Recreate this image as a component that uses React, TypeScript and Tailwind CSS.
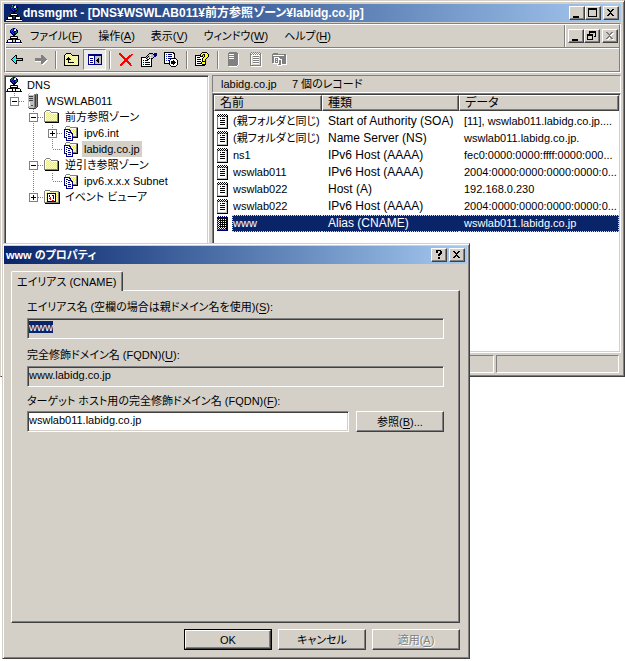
import { useEffect, useRef, useState, ReactNode } from "react";
import clsx from "clsx";

const raised =
  "border border-t-white border-l-white border-r-[#404040] border-b-[#404040] shadow-[inset_-1px_-1px_0_#808080] bg-[#d4d0c8]";
const sunken =
  "border border-t-[#808080] border-l-[#808080] border-r-white border-b-white shadow-[inset_1px_1px_0_#404040,inset_-1px_-1px_0_#d4d0c8]";
const shallow = "border border-t-[#808080] border-l-[#808080] border-r-white border-b-white";
const titleBar =
  "flex h-[18px] items-center bg-linear-to-r from-[#0a246a] to-[#a6caf0] px-[2px] font-bold text-white";

const colors: Record<string, string> = {
  K: "#000000",
  D: "#404040",
  G: "#808080",
  S: "#c0c0c0",
  W: "#ffffff",
  N: "#000080",
  B: "#2040d0",
  C: "#00ffff",
  Y: "#ffff00",
  P: "#f4ec5a",
  y: "#ffffb0",
  R: "#ff0000",
  E: "#008040",
};

const icons = {
  dns: [
    "......GNNG......",
    ".....NENSWN.....",
    "....NEBNWWNK....",
    "....NBNBNNEK....",
    "....NNBNNEEK....",
    ".....NNBNNK.....",
    "......NKKK......",
    ".......KK.......",
    "....DKKKKKKD....",
    "....KWWWWWWK....",
    "....KKKKKKKK....",
    "..DKKKKDDKKKKD..",
    ".KWWWWK..KWWWWK.",
    ".KWWWWK..KWWWWK.",
    "KKNNNNKKKKNNNNKK",
    "WWWWWWWWWWWWWWWW",
  ],
  server: [
    "....SWWWWWWS....",
    "...SWWWWWGGGD...",
    "...SSSSSSGDGD...",
    "...SDDDDSGDGD...",
    "...SSSSSSGDGD...",
    "...SDDDDSGDGD...",
    "...SSSSSSGDGD...",
    "...SDDDDSGDGD...",
    "...SSSSSSGDGD...",
    "...SWSSSSGDGD...",
    "...SWSSSSGDGD...",
    "...SWSSSSGDGD...",
    "...SWSRRSGDGD...",
    "...SSSSSSGDGD...",
    "...GSSSSSGGD....",
    "....DDDDDDD.....",
  ],
  folder: [
    "................",
    "..GGGG..........",
    ".GWWWWG.........",
    "GWyPyPWGGGGGGG..",
    "GWPyPyPWWWWWWGK.",
    "GWyPyPyPyPyPyGK.",
    "GWPyPyPyPyPyPGK.",
    "GWyPyPyPyPyPyGK.",
    "GWPyPyPyPyPyPGK.",
    "GWyPyPyPyPyPyGK.",
    "GWPyPyPyPyPyPGK.",
    "GWyPyPyPyPyPyGK.",
    "GGGGGGGGGGGGGGK.",
    ".KKKKKKKKKKKKKK.",
    "................",
    "................",
  ],
  zone: [
    "................",
    "...GGGG.........",
    "..GWWWWGGGGGGGG.",
    "..GWPyPyWWWWWGK.",
    ".NNNNNNyPyPyPGK.",
    ".NWWWWNNyPyPyGK.",
    ".NWNNWWNPyPyPGK.",
    ".NWWWNNNNyPyPGK.",
    ".NWNWWWWNNyPyGK.",
    ".NWWWNNWWNPyPGK.",
    ".NWNWWWWWNyPyGK.",
    ".NWWWNNNWNGGGGK.",
    ".NNNWWWWWNKKKKK.",
    "...NWNNNWN......",
    "...NWWWWWN......",
    "...NNNNNNN......",
  ],
  events: [
    "................",
    ".GGGGG..........",
    "GWWWWWGGGGGGGGG.",
    "GWyPyPyPyPyPyPGK",
    "GWPKKKKKKKKKyPGK",
    "GWyKWWWWWWWKPyGK",
    "GWPKWNWWNNWKyPGK",
    "GWyKWNWWWNWKPyGK",
    "GWPKWWRWWNWKyPGK",
    "GWyKWRRWWNWKPyGK",
    "GWPKWWRWWWWKyPGK",
    "GWyKWWWWRRWKPyGK",
    "GWPKKKKKKKKKyPGK",
    "GGGGGGGGGGGGGGGK",
    ".KKKKKKKKKKKKKKK",
    "................",
  ],
  record: [
    "..K.K.K.K.K.....",
    ".KWKWKWKWKWK....",
    ".GKSKSKSKSKK....",
    ".GWWWWWWWWSK....",
    ".GWWKWKKKWSK....",
    ".GWWWWWWWWSK....",
    ".GWWKKKKKWSK....",
    ".GWWWWWWWWSK....",
    ".GWWKKKKKWSK....",
    ".GWWWWWWWWSK....",
    ".GWWKKKKKWSK....",
    ".GWWWWWWWWSK....",
    ".GWWWWWWWWSK....",
    ".GSSSSSSSSSK....",
    ".KKKKKKKKKKK....",
    "................",
  ],
  recordSelected: [
    "..N.N.N.N.N.....",
    ".KNKNKNKNKNK....",
    ".NKNKNKNKNKK....",
    ".GNWNWNWNWNK....",
    ".NWKKKKKKNKN....",
    ".GNWNWNWNWNK....",
    ".NWKKKKKKNKN....",
    ".GNWNWNWNWNK....",
    ".NWKKKKKKNKN....",
    ".GNWNWNWNWNK....",
    ".NWKKKKKKNKN....",
    ".GNWNWNWNWNK....",
    ".NWNWNWNWNKN....",
    ".GNGNGNGNGNK....",
    ".KNKNKNKNKNK....",
    "................",
  ],
  back: [
    "................",
    "................",
    "................",
    ".....KK.........",
    "....KCK.........",
    "...KCCK.........",
    "..KCCCKKKKKKK...",
    ".KCCCCCCCCCCK...",
    "..KCCCKKKKKKK...",
    "...KCCK.........",
    "....KCK.........",
    ".....KK.........",
    "................",
    "................",
    "................",
    "................",
  ],
  forward: [
    "................",
    "................",
    "................",
    "........GG......",
    "........GGG.....",
    "........GGGG....",
    "..GGGGGGGGGGG...",
    "..GGGGGGGGGGGG..",
    "..GGGGGGGGGGGWW.",
    "..WWWWWWGGGGWW..",
    "........GGGWW...",
    "........GGWW....",
    ".........WW.....",
    "................",
    "................",
    "................",
  ],
  up: [
    "................",
    "..KKKKK.........",
    ".KyYyYyK........",
    "KyYyYyYyKKKKKKK.",
    "KYyYyYyYyYyYyYK.",
    "KyYyKyYyYyYyYyK.",
    "KYyKKKyYyYyYyYK.",
    "KyKKKKKyYyYyYyK.",
    "KYyYKYyYyYyYyYK.",
    "KyYyKyYyYyYyYyK.",
    "KYyYKKKKKKyYyYK.",
    "KyYyYyYyYyYyYyK.",
    "KYyYyYyYyYyYyYK.",
    "KKKKKKKKKKKKKKK.",
    "................",
    "................",
  ],
  panes: [
    "................",
    "................",
    ".NNNNNNNNNNNNNN.",
    ".NNNNNNNNNNNNNN.",
    ".NWWWWWNSSSSSSN.",
    ".NWWWWWNSSSSSSN.",
    ".NWNNNWNSSSKSSN.",
    ".NWWWWWNSSKKSSN.",
    ".NWNNNWNSKKKSSN.",
    ".NWWWWWNSSKKSSN.",
    ".NWNNNWNSSSKSSN.",
    ".NWWWWWNSSSSSSN.",
    ".NNNNNNNNNNNNNN.",
    "................",
    "................",
    "................",
  ],
  remove: [
    "................",
    ".RR.............",
    ".RRR.........RR.",
    "..RRR......RRR..",
    "...RRR....RRR...",
    "....RRR..RRR....",
    ".....RRRRRR.....",
    "......RRRR......",
    "......RRRR......",
    ".....RRRRRR.....",
    "....RRR..RRR....",
    "...RRR....RRR...",
    "..RRR......RR...",
    "..RR........RR..",
    "................",
    "................",
  ],
  properties: [
    "................",
    "........KKKK.NNN",
    ".......KSSSSKNNN",
    "......KSSWSSSNNN",
    ".....KSKSSSSSNN.",
    "KKKKKSKSSWSSK...",
    "KWWWWKSWKSKK....",
    "KWWWWWKKWWK.....",
    "KWKWKKKWWWK.....",
    "KWWWWWWWWWK.....",
    "KWKWKKKKKWK.....",
    "KWWWWWWWWWK.....",
    "KWKWKKKKKWK.....",
    "KWWWWWWWWWK.....",
    "KKKKKKKKKKK.....",
    "................",
  ],
  exportList: [
    "KKKKKKKKKK......",
    "KWWWWWWWWKK.....",
    "KWBWNNNNWWK.....",
    "KWWWWWWWWWK.....",
    "KWBWNNNNWWK.....",
    "KWWWWWWWWWK.....",
    "KWBWNNNKKKKK....",
    "KWWWWWKWWWWWK...",
    "KWBWNKWWWKWWWK..",
    "KWWWWKWKKKKWWK..",
    "KWWWWKWKKKKKWK..",
    "KKKKKKWKKKKWWK..",
    ".....KWWWKWWWK..",
    "......KWWWWWK...",
    ".......KKKKK....",
    "................",
  ],
  help: [
    ".......KKKKK....",
    "......KYYYYYK...",
    ".....KYYKKYYYK..",
    "KKKKKKYK.KYYYK..",
    "KWWWWKKK.KYYYK..",
    "KWKKKWWWKYYYK...",
    "KWWWWWWKYYYK....",
    "KWKKKKWKYYK.....",
    "KWWWWWWKYYK.....",
    "KWKKKKWKKKK.....",
    "KWWWWWKYYYK.....",
    "KWKKKKKYYYK.....",
    "KWWWWWWKKKK.....",
    "KKKKKKKKKK......",
    "................",
    "................",
  ],
  serverOff: [
    "...GGGGGGGG.....",
    "..GGGGGGGGGG....",
    "..GWWWWWGGGGW...",
    "..GGGGGGGGGGW...",
    "..GWWWWWGGGGW...",
    "..GGGGGGGGGGW...",
    "..GWWWWWGGGGW...",
    "..GGGGGGGGGGW...",
    "..GGGGGGGGGGW...",
    "..GGGGGGGGGGW...",
    "..GGGGGGGGGGW...",
    "..GGGGGGGGGGW...",
    "..GGGGGGGGGGW...",
    "..GGGGGGGGGW....",
    "...WWWWWWWW.....",
    "................",
  ],
  recordOff: [
    "..G.G.G.G.G.....",
    ".GWGWGWGWGWG....",
    ".GGWGWGWGWGGW...",
    ".GWWWWWWWWWGW...",
    ".GW.GGGGGG.GW...",
    ".GW.WWWWWW.GW...",
    ".GW.GGGGGG.GW...",
    ".GW.WWWWWW.GW...",
    ".GW.GGGGGG.GW...",
    ".GW.WWWWWW.GW...",
    ".GW.GGGGGG.GW...",
    ".GW.WWWWWW.GW...",
    ".GW........GW...",
    ".GGGGGGGGGGGW...",
    "..WWWWWWWWWWW...",
    "................",
  ],
  zoneOff: [
    "................",
    ".GGGGG..........",
    "GGGGGGGGGGGGGG..",
    "GWWWWWWWWWWWGGW.",
    "GGGGGGGGGGGGGGW.",
    "GGWWWWWGGGGGGGW.",
    "GGWGGGWWGGGGGGW.",
    "GGWGWGWWWWGGGGW.",
    "GGWGGGWGGWGGGGW.",
    "GGWGWGWGGWGGGGW.",
    "GGWGGGWGGWGGGGW.",
    ".WWWWWWGGWGGGGW.",
    ".....WGGGWWWWWW.",
    ".....WWWWW......",
    "................",
    "................",
  ],
};

type IconName = keyof typeof icons;

function PixelIcon({ name }: { name: IconName }) {
  return (
    <svg width="16" height="16" viewBox="0 0 16 16" shapeRendering="crispEdges" className="shrink-0" aria-hidden="true">
      {icons[name].flatMap((row, y) =>
        row.split("").map((c, x) =>
          c === "." ? null : <rect key={`${x}-${y}`} x={x} y={y} width="1" height="1" fill={colors[c]} />
        )
      )}
    </svg>
  );
}

const glyphs = {
  min: "M3 9h6v2H3z",
  max: "M2 1h9v9H2zM3 3v6h7V3z",
  restore: "M4 1h7v6H9V6h1V3H5v1H4zM2 4h6v6H2zM3 6v3h4V6z",
  close: "M3 2h2v1h1v1h1V3h1V2h2v1H9v1H8v1H7v1h1v1h1v1h1v1H8V8H7V7H6v1H5v1H3V8h1V7h1V6h1V5H5V4H4V3H3z",
  help: "M4 1h5v1h1v3H9v1H8v1H6V5h1V4h1V2H6v2H4V2h0zM6 8h2v2H6z",
};

function CaptionButton({ glyph, label, disabled }: { glyph: keyof typeof glyphs; label: string; disabled?: boolean }) {
  return (
    <button type="button" aria-label={label} disabled={disabled} className={clsx("h-[14px] w-4", raised)}>
      <svg width="14" height="12" viewBox="0 0 14 12" shapeRendering="crispEdges">
        {disabled && <path d={glyphs[glyph]} fill="#fff" fillRule="evenodd" transform="translate(1 1)" />}
        <path d={glyphs[glyph]} fill={disabled ? "#808080" : "#000"} fillRule="evenodd" />
      </svg>
    </button>
  );
}

// One 19px wide column of the tree: v = line through, t = tee, l = last child
function Branch({ kind, toggle }: { kind: string; toggle?: string }) {
  return (
    <svg width="19" height="16" viewBox="0 0 19 16" shapeRendering="crispEdges" className="shrink-0" aria-hidden="true">
      <g stroke="#808080" strokeDasharray="1 1">
        {kind !== " " && <path d={kind === "l" ? "M8.5 0v8" : "M8.5 0v16"} />}
        {(kind === "t" || kind === "l") && <path d="M9 8.5h10" />}
      </g>
      {toggle && (
        <>
          <rect x="4.5" y="4.5" width="8" height="8" fill="#fff" stroke="#808080" />
          <path d={toggle === "+" ? "M6 8.5h5M8.5 6v5" : "M6 8.5h5"} stroke="#000" />
        </>
      )}
    </svg>
  );
}

const tree: { label: string; icon: IconName; lines: string; toggle?: string; selected?: boolean }[] = [
  { label: "DNS", icon: "dns", lines: "" },
  { label: "WSWLAB011", icon: "server", lines: "l", toggle: "-" },
  { label: "前方参照ゾーン", icon: "folder", lines: " t", toggle: "-" },
  { label: "ipv6.int", icon: "zone", lines: " vt", toggle: "+" },
  { label: "labidg.co.jp", icon: "zone", lines: " vl", selected: true },
  { label: "逆引き参照ゾーン", icon: "folder", lines: " t", toggle: "-" },
  { label: "ipv6.x.x.x Subnet", icon: "zone", lines: " vl" },
  { label: "イベント ビューア", icon: "events", lines: " l", toggle: "+" },
];

const records = [
  ["(親フォルダと同じ)", "Start of Authority (SOA)", "[11], wswlab011.labidg.co.jp...."],
  ["(親フォルダと同じ)", "Name Server (NS)", "wswlab011.labidg.co.jp."],
  ["ns1", "IPv6 Host (AAAA)", "fec0:0000:0000:ffff:0000:000..."],
  ["wswlab011", "IPv6 Host (AAAA)", "2004:0000:0000:0000:0000:0..."],
  ["wswlab022", "Host (A)", "192.168.0.230"],
  ["wswlab022", "IPv6 Host (AAAA)", "2004:0000:0000:0000:0000:0..."],
  ["www", "Alias (CNAME)", "wswlab011.labidg.co.jp"],
];

const menus = [
  ["ファイル", "F"],
  ["操作", "A"],
  ["表示", "V"],
  ["ウィンドウ", "W"],
  ["ヘルプ", "H"],
];

const toolbar: { icon: IconName; label: string; disabled?: boolean; pressed?: boolean }[][] = [
  [
    { icon: "back", label: "戻る" },
    { icon: "forward", label: "進む", disabled: true },
  ],
  [
    { icon: "up", label: "1 つ上のレベルへ" },
    { icon: "panes", label: "コンソール ツリーの表示", pressed: true },
  ],
  [
    { icon: "remove", label: "削除" },
    { icon: "properties", label: "プロパティ" },
    { icon: "exportList", label: "一覧のエクスポート" },
  ],
  [{ icon: "help", label: "ヘルプ" }],
  [
    { icon: "serverOff", label: "新しいサーバー", disabled: true },
    { icon: "recordOff", label: "新しいレコード", disabled: true },
    { icon: "zoneOff", label: "新しいゾーン", disabled: true },
  ],
];

function Key({ k }: { k: string }) {
  return (
    <>
      (<span className="underline underline-offset-2">{k}</span>)
    </>
  );
}

function PushButton({ children, disabled, primary }: { children: ReactNode; disabled?: boolean; primary?: boolean }) {
  return (
    <button
      type="button"
      disabled={disabled}
      className={clsx(
        "h-[21px] w-[88px] shrink-0",
        raised,
        primary && "border-2 outline outline-black -outline-offset-1",
        disabled && "text-[#808080] [text-shadow:1px_1px_0_#fff]"
      )}
    >
      {children}
    </button>
  );
}

function PropertiesDialog() {
  const aliasRef = useRef<HTMLInputElement>(null);
  const [target, setTarget] = useState("wswlab011.labidg.co.jp");

  useEffect(() => {
    aliasRef.current?.focus();
    aliasRef.current?.select();
  }, []);

  const field = clsx("block h-[21px] w-full px-px pb-[3px] outline-none", sunken);

  return (
    <section
      role="dialog"
      aria-label="www のプロパティ"
      className="absolute top-[243px] left-[2px] flex h-[416px] w-[468px] flex-col border border-t-[#d4d0c8] border-l-[#d4d0c8] border-r-[#404040] border-b-[#404040] bg-[#d4d0c8] p-[2px] pl-px shadow-[inset_1px_1px_0_#fff,inset_-1px_-1px_0_#808080]"
    >
      <header className={titleBar}>
        <h2 className="flex-1">www のプロパティ</h2>
        <div className="flex gap-[2px]">
          <CaptionButton glyph="help" label="ヘルプ" />
          <CaptionButton glyph="close" label="閉じる" />
        </div>
      </header>

      <div className="flex flex-1 flex-col px-[7px] pt-[7px]">
        <div role="tablist" className="flex">
          <button
            type="button"
            role="tab"
            aria-selected="true"
            className="relative z-10 -mb-px h-5 rounded-t-[2px] border border-b-0 border-t-white border-l-white border-r-[#404040] bg-[#d4d0c8] px-[5px] shadow-[inset_-1px_0_0_#808080]"
          >
            エイリアス (CNAME)
          </button>
        </div>
        <div
          role="tabpanel"
          className="h-[333px] border border-t-white border-l-white border-r-[#404040] border-b-[#404040] px-[15px] pt-2 shadow-[inset_-1px_-1px_0_#808080]"
        >
          <label htmlFor="alias" className="mb-[3px] block leading-4">
            エイリアス名 (空欄の場合は親ドメイン名を使用)
            <Key k="S" />:
          </label>
          <input
            id="alias"
            ref={aliasRef}
            readOnly
            defaultValue="www"
            className={clsx(field, "selection:bg-[#0a246a] selection:text-white")}
          />
          <label htmlFor="fqdn" className="mt-2 mb-[3px] block leading-4">
            完全修飾ドメイン名 (FQDN)
            <Key k="U" />:
          </label>
          <input id="fqdn" readOnly defaultValue="www.labidg.co.jp" className={field} />
          <label htmlFor="target" className="mt-[6px] mb-[2px] block leading-4">
            ターゲット ホスト用の完全修飾ドメイン名 (FQDN)
            <Key k="F" />:
          </label>
          <div className="flex gap-[7px]">
            <input
              id="target"
              value={target}
              onChange={(e) => setTarget(e.target.value)}
              className={clsx(field, "min-w-0 flex-1 bg-white")}
            />
            <PushButton>
              参照
              <Key k="B" />
              ...
            </PushButton>
          </div>
        </div>
        <div className="mt-[6px] flex justify-end gap-[6px]">
          <PushButton primary>OK</PushButton>
          <PushButton>キャンセル</PushButton>
          <PushButton disabled>
            適用
            <Key k="A" />
          </PushButton>
        </div>
      </div>
    </section>
  );
}

export default function App() {
  return (
    <div className="relative min-h-screen overflow-hidden bg-white font-['Liberation_Sans','Noto_Sans_CJK_JP',sans-serif] text-[11px] leading-4 text-black [font-feature-settings:'palt']">
      <main className="border border-t-[#d4d0c8] border-l-[#d4d0c8] border-r-[#404040] border-b-[#404040] bg-[#d4d0c8] p-[3px] shadow-[inset_1px_1px_0_#fff,inset_-1px_-1px_0_#808080]">
        <header className={titleBar}>
          <PixelIcon name="dns" />
          <h1 className="ml-px flex-1 truncate text-[12px]">dnsmgmt - [DNS¥WSWLAB011¥前方参照ゾーン¥labidg.co.jp]</h1>
          <div className="flex">
            <CaptionButton glyph="min" label="最小化" />
            <CaptionButton glyph="max" label="最大化" />
            <span className="w-[2px]" />
            <CaptionButton glyph="close" label="閉じる" />
          </div>
        </header>

        {/* Menu bar and toolbar */}
        <div className="mt-px border border-t-[#808080] border-l-[#808080] border-r-white border-b-white">
          <div className="border border-t-white border-l-white border-r-[#808080] border-b-[#808080]">
            <div className="flex h-[22px] items-stretch">
              <nav className="flex flex-1 items-center">
                <PixelIcon name="dns" />
                {menus.map(([label, k]) => (
                  <button key={k} type="button" className="px-2">
                    {label}
                    <Key k={k} />
                  </button>
                ))}
              </nav>
              <div className="flex items-center border-l border-[#808080] pr-px pl-[3px] shadow-[inset_1px_0_0_#fff]">
                <CaptionButton glyph="min" label="子ウィンドウを最小化" />
                <CaptionButton glyph="restore" label="元に戻す" />
                <span className="w-[2px]" />
                <CaptionButton glyph="close" label="子ウィンドウを閉じる" disabled />
              </div>
            </div>
            <div className="flex h-6 items-center border-t border-[#808080] shadow-[inset_0_1px_0_#fff]">
              {toolbar.map((group, i) => (
                <div key={i} className="flex items-center">
                  {i > 0 && <span className="mx-[3px] h-[18px] w-[2px] border-l border-[#808080] bg-white" />}
                  {group.map((b) => (
                    <button
                      key={b.label}
                      type="button"
                      aria-label={b.label}
                      aria-pressed={b.pressed}
                      disabled={b.disabled}
                      className={clsx("flex h-[21px] w-[23px] items-center justify-center", b.pressed && [shallow, "bg-[#eceae6]"])}
                    >
                      <PixelIcon name={b.icon} />
                    </button>
                  ))}
                </div>
              ))}
            </div>
          </div>
        </div>

        <div className="mt-[2px] flex h-[278px] gap-[3px]">
          <ul role="tree" className={clsx("w-[205px] shrink-0 bg-white p-px", sunken)}>
            {tree.map((n) => (
              <li key={n.label} role="treeitem" aria-selected={!!n.selected} className="flex h-4 items-center whitespace-nowrap">
                {n.lines.split("").map((kind, i) => (
                  <Branch key={i} kind={kind} toggle={i === n.lines.length - 1 ? n.toggle : undefined} />
                ))}
                <PixelIcon name={n.icon} />
                <span className={clsx("ml-[3px] px-[2px]", n.selected && "bg-[#d4d0c8]")}>{n.label}</span>
              </li>
            ))}
          </ul>

          <div className="flex min-w-0 flex-1 flex-col">
            <p className={clsx("h-[18px] shrink-0 px-2 whitespace-pre", shallow)}>{"labidg.co.jp     7 個のレコード"}</p>
            <div className={clsx("flex-1 bg-white p-px", sunken)}>
              <table className="w-full table-fixed border-separate border-spacing-0">
                <colgroup>
                  <col className="w-[108px]" />
                  <col className="w-[137px]" />
                  <col />
                </colgroup>
                <thead>
                  <tr>
                    {["名前", "種類", "データ"].map((h) => (
                      <th key={h} className={clsx("h-4 px-[5px] py-0 text-left text-[12px] leading-[14px] font-normal", raised)}>
                        {h}
                      </th>
                    ))}
                  </tr>
                </thead>
                <tbody>
                  <tr aria-hidden="true">
                    <td className="h-[2px] p-0" colSpan={3} />
                  </tr>
                  {records.map(([name, type, data], i) => {
                    const selected = i === records.length - 1;
                    const cell = clsx(
                      "overflow-hidden border-y border-dotted whitespace-nowrap",
                      selected ? "border-[#f5db95] bg-[#0a246a] text-white" : "border-transparent"
                    );
                    return (
                      <tr key={i} className="h-[17px] leading-[15px]">
                        <td className="p-0">
                          <div className="flex items-center pl-[2px]">
                            <PixelIcon name={selected ? "recordSelected" : "record"} />
                            <span className={clsx(cell, "flex-1 border-l")}>{name}</span>
                          </div>
                        </td>
                        <td className={clsx(cell, "py-0 pr-0 pl-[6px] text-[12px]")}>{type}</td>
                        <td className={clsx(cell, "border-r py-0 pr-0 pl-[5px]")}>{data}</td>
                      </tr>
                    );
                  })}
                </tbody>
              </table>
            </div>
          </div>
        </div>

        <footer className="mt-[2px] flex h-[18px] gap-[2px] pr-[2px]">
          <div className={clsx("flex-1", shallow)} />
          <div className={clsx("w-[123px]", shallow)} />
        </footer>
      </main>

      <PropertiesDialog />
    </div>
  );
}
